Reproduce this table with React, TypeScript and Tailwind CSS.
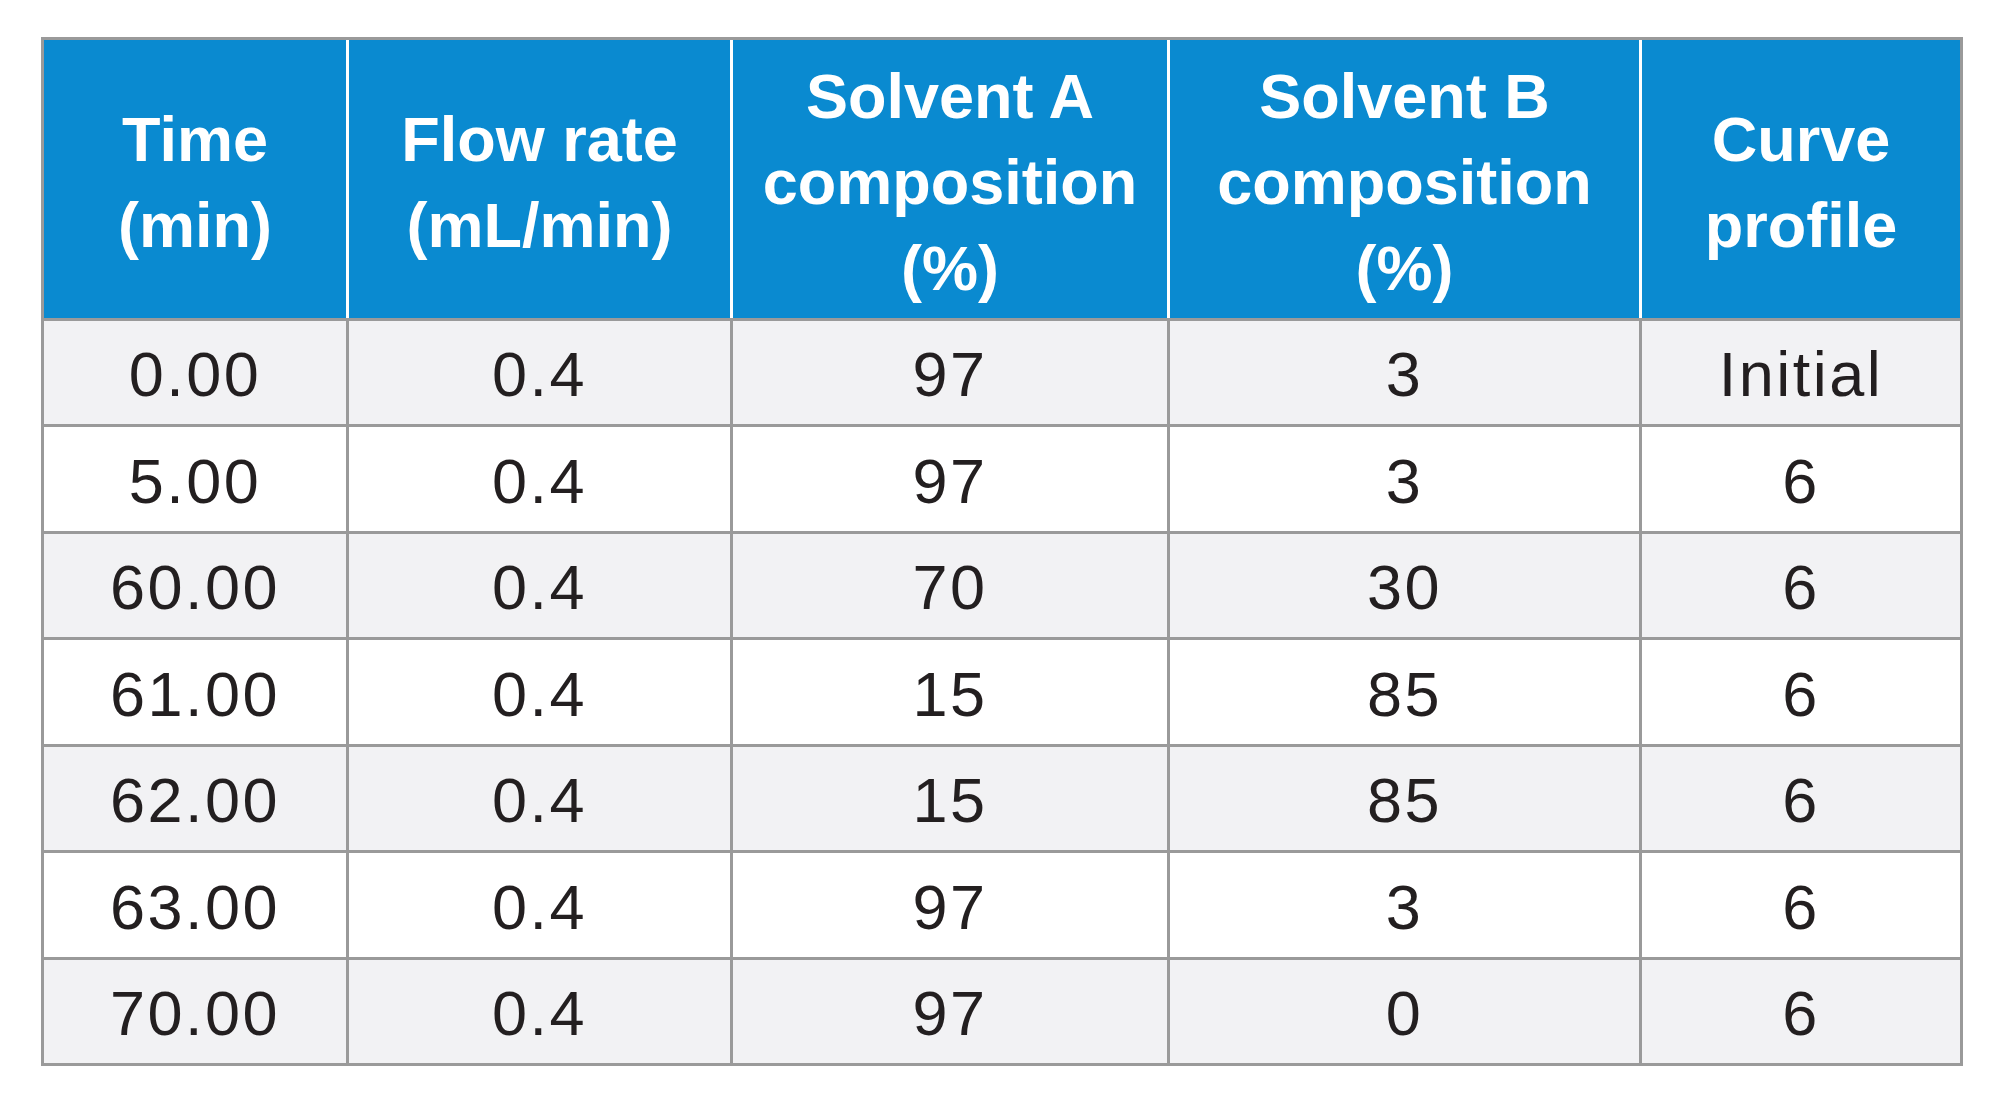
import React from "react";

const widths = ["w-[302px]", "w-[384px]", "w-[437px]", "w-[472px]", "w-[321px]"];

const headers: string[][] = [
  ["Time", "(min)"],
  ["Flow rate", "(mL/min)"],
  ["Solvent A", "composition", "(%)"],
  ["Solvent B", "composition", "(%)"],
  ["Curve", "profile"],
];

const rows: string[][] = [
  ["0.00", "0.4", "97", "3", "Initial"],
  ["5.00", "0.4", "97", "3", "6"],
  ["60.00", "0.4", "70", "30", "6"],
  ["61.00", "0.4", "15", "85", "6"],
  ["62.00", "0.4", "15", "85", "6"],
  ["63.00", "0.4", "97", "3", "6"],
  ["70.00", "0.4", "97", "0", "6"],
];

export default function App() {
  return (
    <div
      className="w-[2000px] h-[1107px] bg-white pt-[37px] pl-[41px]"
      style={{ fontFamily: '"Liberation Sans", Arial, sans-serif' }}
    >
      <div className="w-[1922px] border-[3px] border-[#9a9a9a] flex flex-col">
        <div className="flex h-[278px] bg-[#0a8ad0]">
          {headers.map((lines, i) => (
            <div
              key={i}
              className={`${widths[i]} ${i > 0 ? "border-l-[3px] border-white" : ""} flex flex-col items-center justify-center pt-[5px] text-white font-bold text-[63px] leading-[86px] text-center`}
            >
              {lines.map((l, j) => (
                <span key={j}>{l}</span>
              ))}
            </div>
          ))}
        </div>
        {rows.map((r, ri) => (
          <div
            key={ri}
            className={`flex ${ri % 2 === 0 ? "h-[106px] bg-[#f2f2f4]" : "h-[107px] bg-white"} border-t-[3px] border-[#9a9a9a]`}
          >
            {r.map((c, ci) => (
              <div
                key={ci}
                className={`${widths[ci]} ${ci > 0 ? "border-l-[3px] border-[#9a9a9a]" : ""} flex items-center justify-center pt-[4px] text-[#231f20] text-[63px] tracking-[2.5px]`}
              >
                {c}
              </div>
            ))}
          </div>
        ))}
      </div>
    </div>
  );
}
